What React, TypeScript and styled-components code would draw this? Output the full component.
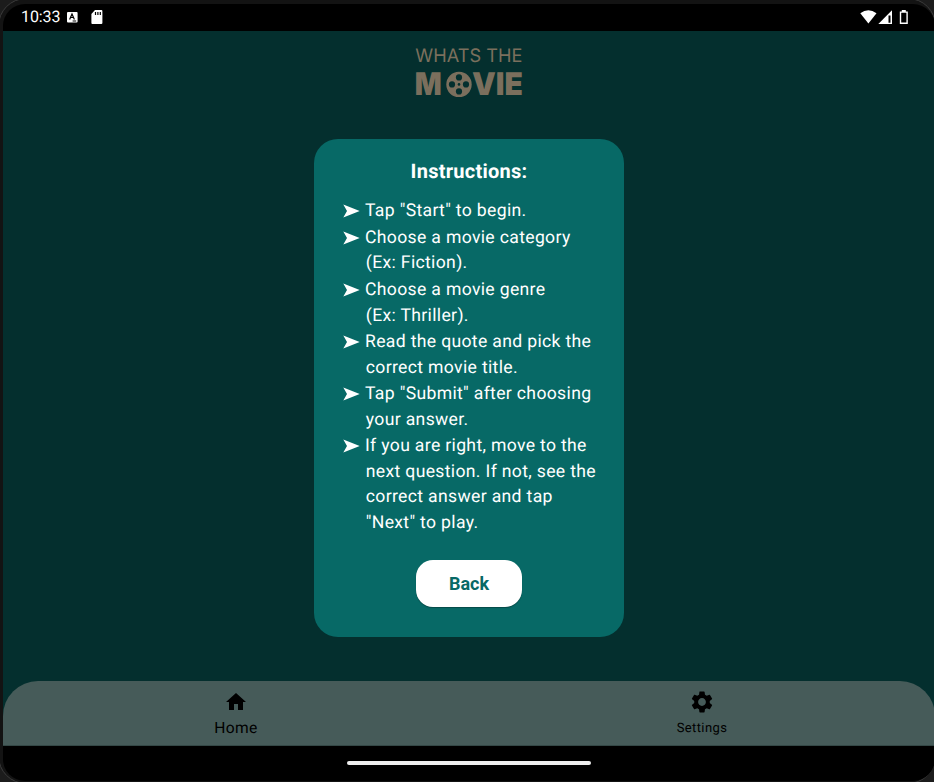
import React from "react";
import styled, { createGlobalStyle } from "styled-components";
import { MdHome, MdSettings } from "react-icons/md";

const GlobalStyle = createGlobalStyle`
  * { box-sizing: border-box; }
  html, body, #root { height: 100%; }
  body { margin: 0; overflow: hidden; background: #1c1c1c; font-family: Roboto, "Noto Sans", sans-serif; text-rendering: geometricPrecision; }
`;

const Bezel = styled.div`
  width: 938px;
  height: 786px;
  margin: -2px;
  padding: 5px 0 2px 4px;
  border: 1px solid #3c3c3c;
  border-radius: 28px;
  background: #131313;
`;

const Screen = styled.div`
  display: flex;
  flex-direction: column;
  width: 932px;
  height: 777px;
  border-radius: 22px;
  overflow: hidden;
  background: #000;
`;

const StatusBar = styled.header`
  display: flex;
  justify-content: space-between;
  height: 27px;
  padding: 0 26px 0 18px;
  color: #fff;
`;

const StatusGroup = styled.div`
  display: flex;
  align-items: center;
  height: 26px;
`;

const Clock = styled.span`
  width: 46px;
  font-size: 16px;
  line-height: 26px;
  letter-spacing: -0.1px;
`;

const StatusIcon = styled.svg<{ $gap?: number }>`
  display: block;
  margin-left: ${(p) => p.$gap ?? 0}px;
`;

const Stage = styled.main`
  display: flex;
  flex-direction: column;
  align-items: center;
  height: 650px;
  background: #042f2e;
`;

const Logo = styled.svg`
  display: block;
  width: 120px;
  height: 70px;
  margin-top: 9px;
  overflow: visible;
  fill: #7b6f5d;
  font-family: Inter, sans-serif;
`;

const Card = styled.section`
  display: flex;
  flex-direction: column;
  align-items: center;
  width: 310px;
  height: 498px;
  margin-top: 29px;
  padding-top: 19px;
  border-radius: 24px;
  background: #076966;
  color: #fff;
`;

const Title = styled.h1`
  margin: 0;
  font-size: 20px;
  line-height: 26px;
  font-weight: 700;
  letter-spacing: 0.25px;
`;

const Steps = styled.ul`
  display: flex;
  flex-direction: column;
  gap: 0.9px;
  align-self: stretch;
  margin: 15.4px 0 0;
  padding: 0 0 0 29px;
  list-style: none;
`;

const Step = styled.li`
  display: flex;
  font-size: 17.6px;
  line-height: 25.6px;
  letter-spacing: 0.33px;
  white-space: pre;
`;

const StepText = styled.span`
  padding-left: 0.8px;
  text-indent: -0.8px;
`;

const Arrow = styled.svg`
  flex: none;
  width: 17px;
  height: 14px;
  margin: 5px 5px 0 0;
  fill: #fff;
`;

const BackButton = styled.button`
  width: 106px;
  height: 47px;
  margin-top: 23.6px;
  padding: 0;
  border: 0;
  border-radius: 17px;
  background: #fff;
  box-shadow: 0 1px 1px rgba(0, 0, 0, 0.3);
  color: #076966;
  font: 700 18px/47px Roboto, sans-serif;
`;

const TabShelf = styled.div`
  height: 65px;
  background: #042f2e;
`;

const TabBar = styled.nav`
  display: grid;
  grid-template-columns: 1fr 1fr;
  height: 65px;
  border-radius: 35px 35px 0 0;
  border-bottom: 1px solid #344846;
  background: #465b59;
`;

const Tab = styled.a<{ $active?: boolean }>`
  display: flex;
  flex-direction: column;
  align-items: center;
  padding-top: ${(p) => (p.$active ? 9 : 8)}px;
  color: #000;
  font-size: ${(p) => (p.$active ? 15.6 : 13)}px;
  letter-spacing: 0.4px;
  line-height: 20px;

  svg { margin-bottom: 4px; }
`;

const SystemNav = styled.footer`
  display: flex;
  justify-content: center;
  padding-top: 15px;
`;

const Handle = styled.div`
  width: 244px;
  height: 4px;
  border-radius: 2px;
  background: #eeeeee;
`;

const steps: string[] = [
  'Tap "Start" to begin.',
  "Choose a movie category\n(Ex: Fiction).",
  "Choose a movie genre\n(Ex: Thriller).",
  "Read the quote and pick the\ncorrect movie title.",
  'Tap "Submit" after choosing\nyour answer.',
  'If you are right, move to the\nnext question. If not, see the\ncorrect answer and tap\n"Next" to play.',
];

function MovieLogo() {
  return (
    <Logo viewBox="0 0 120 70" role="img" aria-label="Whats the movie">
      <text x="6.3" y="22.2" fontSize="18.5" fontWeight="400" textLength="107" lengthAdjust="spacingAndGlyphs">WHATS THE</text>
      <text x="5.7" y="55" fontSize="31.3" fontWeight="900" textLength="27" lengthAdjust="spacingAndGlyphs">M</text>
      <text x="63" y="55" fontSize="31.3" fontWeight="900" textLength="51" lengthAdjust="spacingAndGlyphs">VIE</text>
      <circle cx="50" cy="44.4" r="12.7" />
      <g fill="#042f2e">
        <circle cx="50" cy="37.4" r="3.1" />
        <circle cx="50" cy="51.4" r="3.1" />
        <circle cx="43" cy="44.4" r="3.1" />
        <circle cx="57" cy="44.4" r="3.1" />
        <circle cx="50" cy="44.4" r="1.3" />
      </g>
    </Logo>
  );
}

export default function App() {
  return (
    <>
      <GlobalStyle />
      <Bezel>
        <Screen>
          <StatusBar>
            <StatusGroup>
              <Clock>10:33</Clock>
              <StatusIcon width="11" height="12" viewBox="0 0 11 12">
                <rect y="1" width="10.6" height="10.6" rx="1" fill="#fff" />
                <path d="M2.6 8.5 5 3l2.4 5.5M3.6 6.5h2.9M5.6 10h3.6" fill="none" stroke="#000" strokeWidth="1.2" />
              </StatusIcon>
              <StatusIcon $gap={13} width="12" height="14" viewBox="0 0 12 14">
                <path d="M4 0h6.4Q11.4 0 11.4 1v12q0 1-1 1H1.4q-1 0-1-1V4z" fill="#fff" />
                <path d="M4.5 2v3M6.9 2v3M9.3 2v3" stroke="#000" strokeWidth="1.2" />
              </StatusIcon>
            </StatusGroup>
            <StatusGroup>
              <StatusIcon width="17" height="14" viewBox="0 0 17 14">
                <path d="M.3 3.2Q8.3-2.8 16.5 3.2L8.4 13.6z" fill="#fff" />
              </StatusIcon>
              <StatusIcon $gap={1} width="15" height="14" viewBox="0 0 15 14">
                <path d="M.3 14 14 .3V14z" fill="#fff" />
                <path d="M10.5 5.5h2V12.7h-2z" fill="#000" />
              </StatusIcon>
              <StatusIcon $gap={6} width="10" height="14" viewBox="0 0 10 14">
                <path d="M1.5 2.1h6.6v11.1H1.5z" fill="none" stroke="#fff" strokeWidth="1.4" />
                <path d="M2.8 0h4v2h-4z" fill="#fff" />
              </StatusIcon>
            </StatusGroup>
          </StatusBar>
          <Stage>
            <MovieLogo />
            <Card>
              <Title>Instructions:</Title>
              <Steps>
                {steps.map((text) => (
                  <Step key={text}>
                    <Arrow viewBox="0 0 17 14">
                      <path d="M.3.6 16.7 7 .3 13.4 4 7z" />
                    </Arrow>
                    <StepText>{text}</StepText>
                  </Step>
                ))}
              </Steps>
              <BackButton>Back</BackButton>
            </Card>
          </Stage>
          <TabShelf>
            <TabBar>
              <Tab $active>
                <MdHome size={24} />
                Home
              </Tab>
              <Tab>
                <MdSettings size={26} />
                Settings
              </Tab>
            </TabBar>
          </TabShelf>
          <SystemNav>
            <Handle />
          </SystemNav>
        </Screen>
      </Bezel>
    </>
  );
}
